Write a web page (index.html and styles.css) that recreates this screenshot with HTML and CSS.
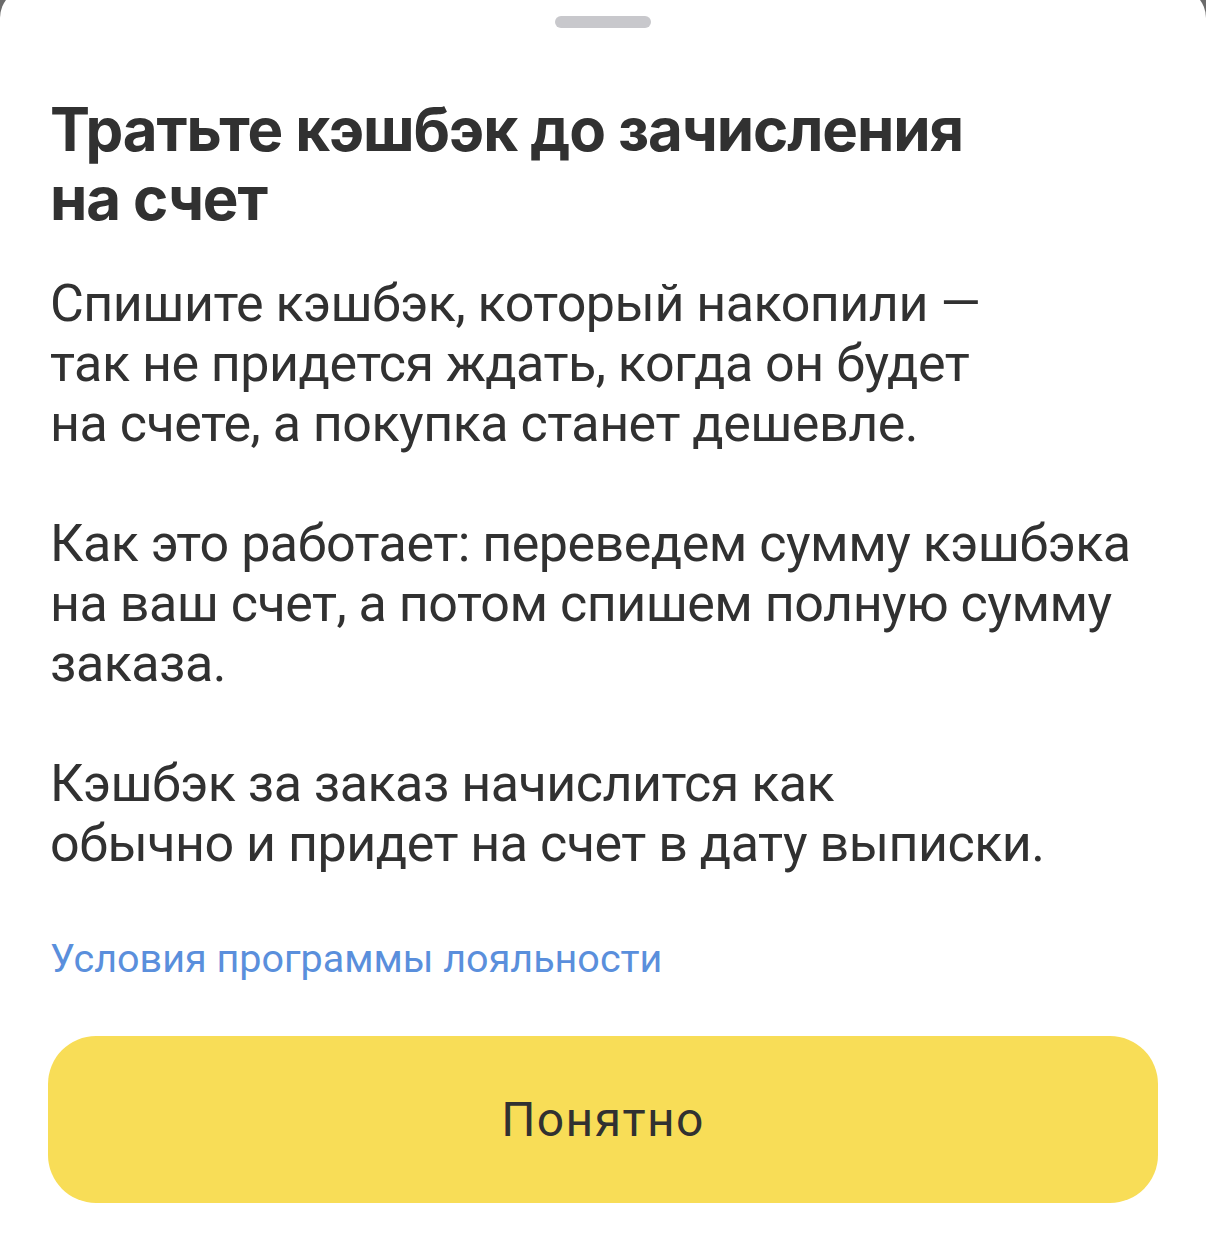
FILE: index.html
```html
<!DOCTYPE html>
<html lang="ru">
<head>
<meta charset="utf-8">
<link rel="stylesheet" href="styles.css">
</head>
<body>
<div class="sheet">
  <div class="handle"></div>
  <div class="content">
    <h1 class="title">Тратьте кэшбэк до зачисления<br>на счет</h1>
    <p class="text">Спишите кэшбэк, который накопили —<br>так не придется ждать, когда он будет<br>на счете, а покупка станет дешевле.</p>
    <p class="text">Как это работает: переведем сумму кэшбэка<br>на ваш счет, а потом спишем полную сумму<br>заказа.</p>
    <p class="text">Кэшбэк за заказ начислится как<br>обычно и придет на счет в дату выписки.</p>
    <a class="link" href="#">Условия программы лояльности</a>
    <button class="btn" type="button">Понятно</button>
  </div>
</div>
</body>
</html>
```

FILE: styles.css
```css
html, body {
  margin: 0;
  padding: 0;
  background: #6b6b6b;
  height: 100%;
  overflow: hidden;
}
.sheet {
  margin-top: -12px;
  background: #ffffff;
  border-radius: 30px 30px 0 0;
  min-height: calc(100vh + 12px);
  padding-top: 28px;
  box-sizing: border-box;
  font-family: Roboto, "Noto Sans", sans-serif;
  color: #313131;
}
.handle {
  width: 96px;
  height: 12px;
  border-radius: 6px;
  background: #c8c8cc;
  margin: 0 auto;
}
.content {
  padding: 0 48px 0 50px;
  display: flex;
  flex-direction: column;
  align-items: flex-start;
}
.title {
  margin: 67px 0 0;
  font-family: Inter, "Noto Sans", sans-serif;
  font-size: 60px;
  line-height: 69px;
  font-weight: 700;
  letter-spacing: -1.1px;
  white-space: nowrap;
}
.text {
  margin: 41px 0 0;
  font-size: 52px;
  line-height: 60px;
  font-weight: 400;
  letter-spacing: -0.5px;
  white-space: nowrap;
}
.text + .text {
  margin-top: 60px;
}
.link {
  margin-top: 61px;
  font-size: 39.5px;
  line-height: 48px;
  color: #5a8fdc;
  text-decoration: none;
  white-space: nowrap;
}
.btn {
  margin-top: 53px;
  align-self: stretch;
  height: 167px;
  margin-left: -2px;
  border: 0;
  border-radius: 48px;
  background: #f8dd57;
  color: #313131;
  font-family: Roboto, "Noto Sans", sans-serif;
  font-size: 48px;
  letter-spacing: 1.4px;
  font-weight: 400;
}
```
